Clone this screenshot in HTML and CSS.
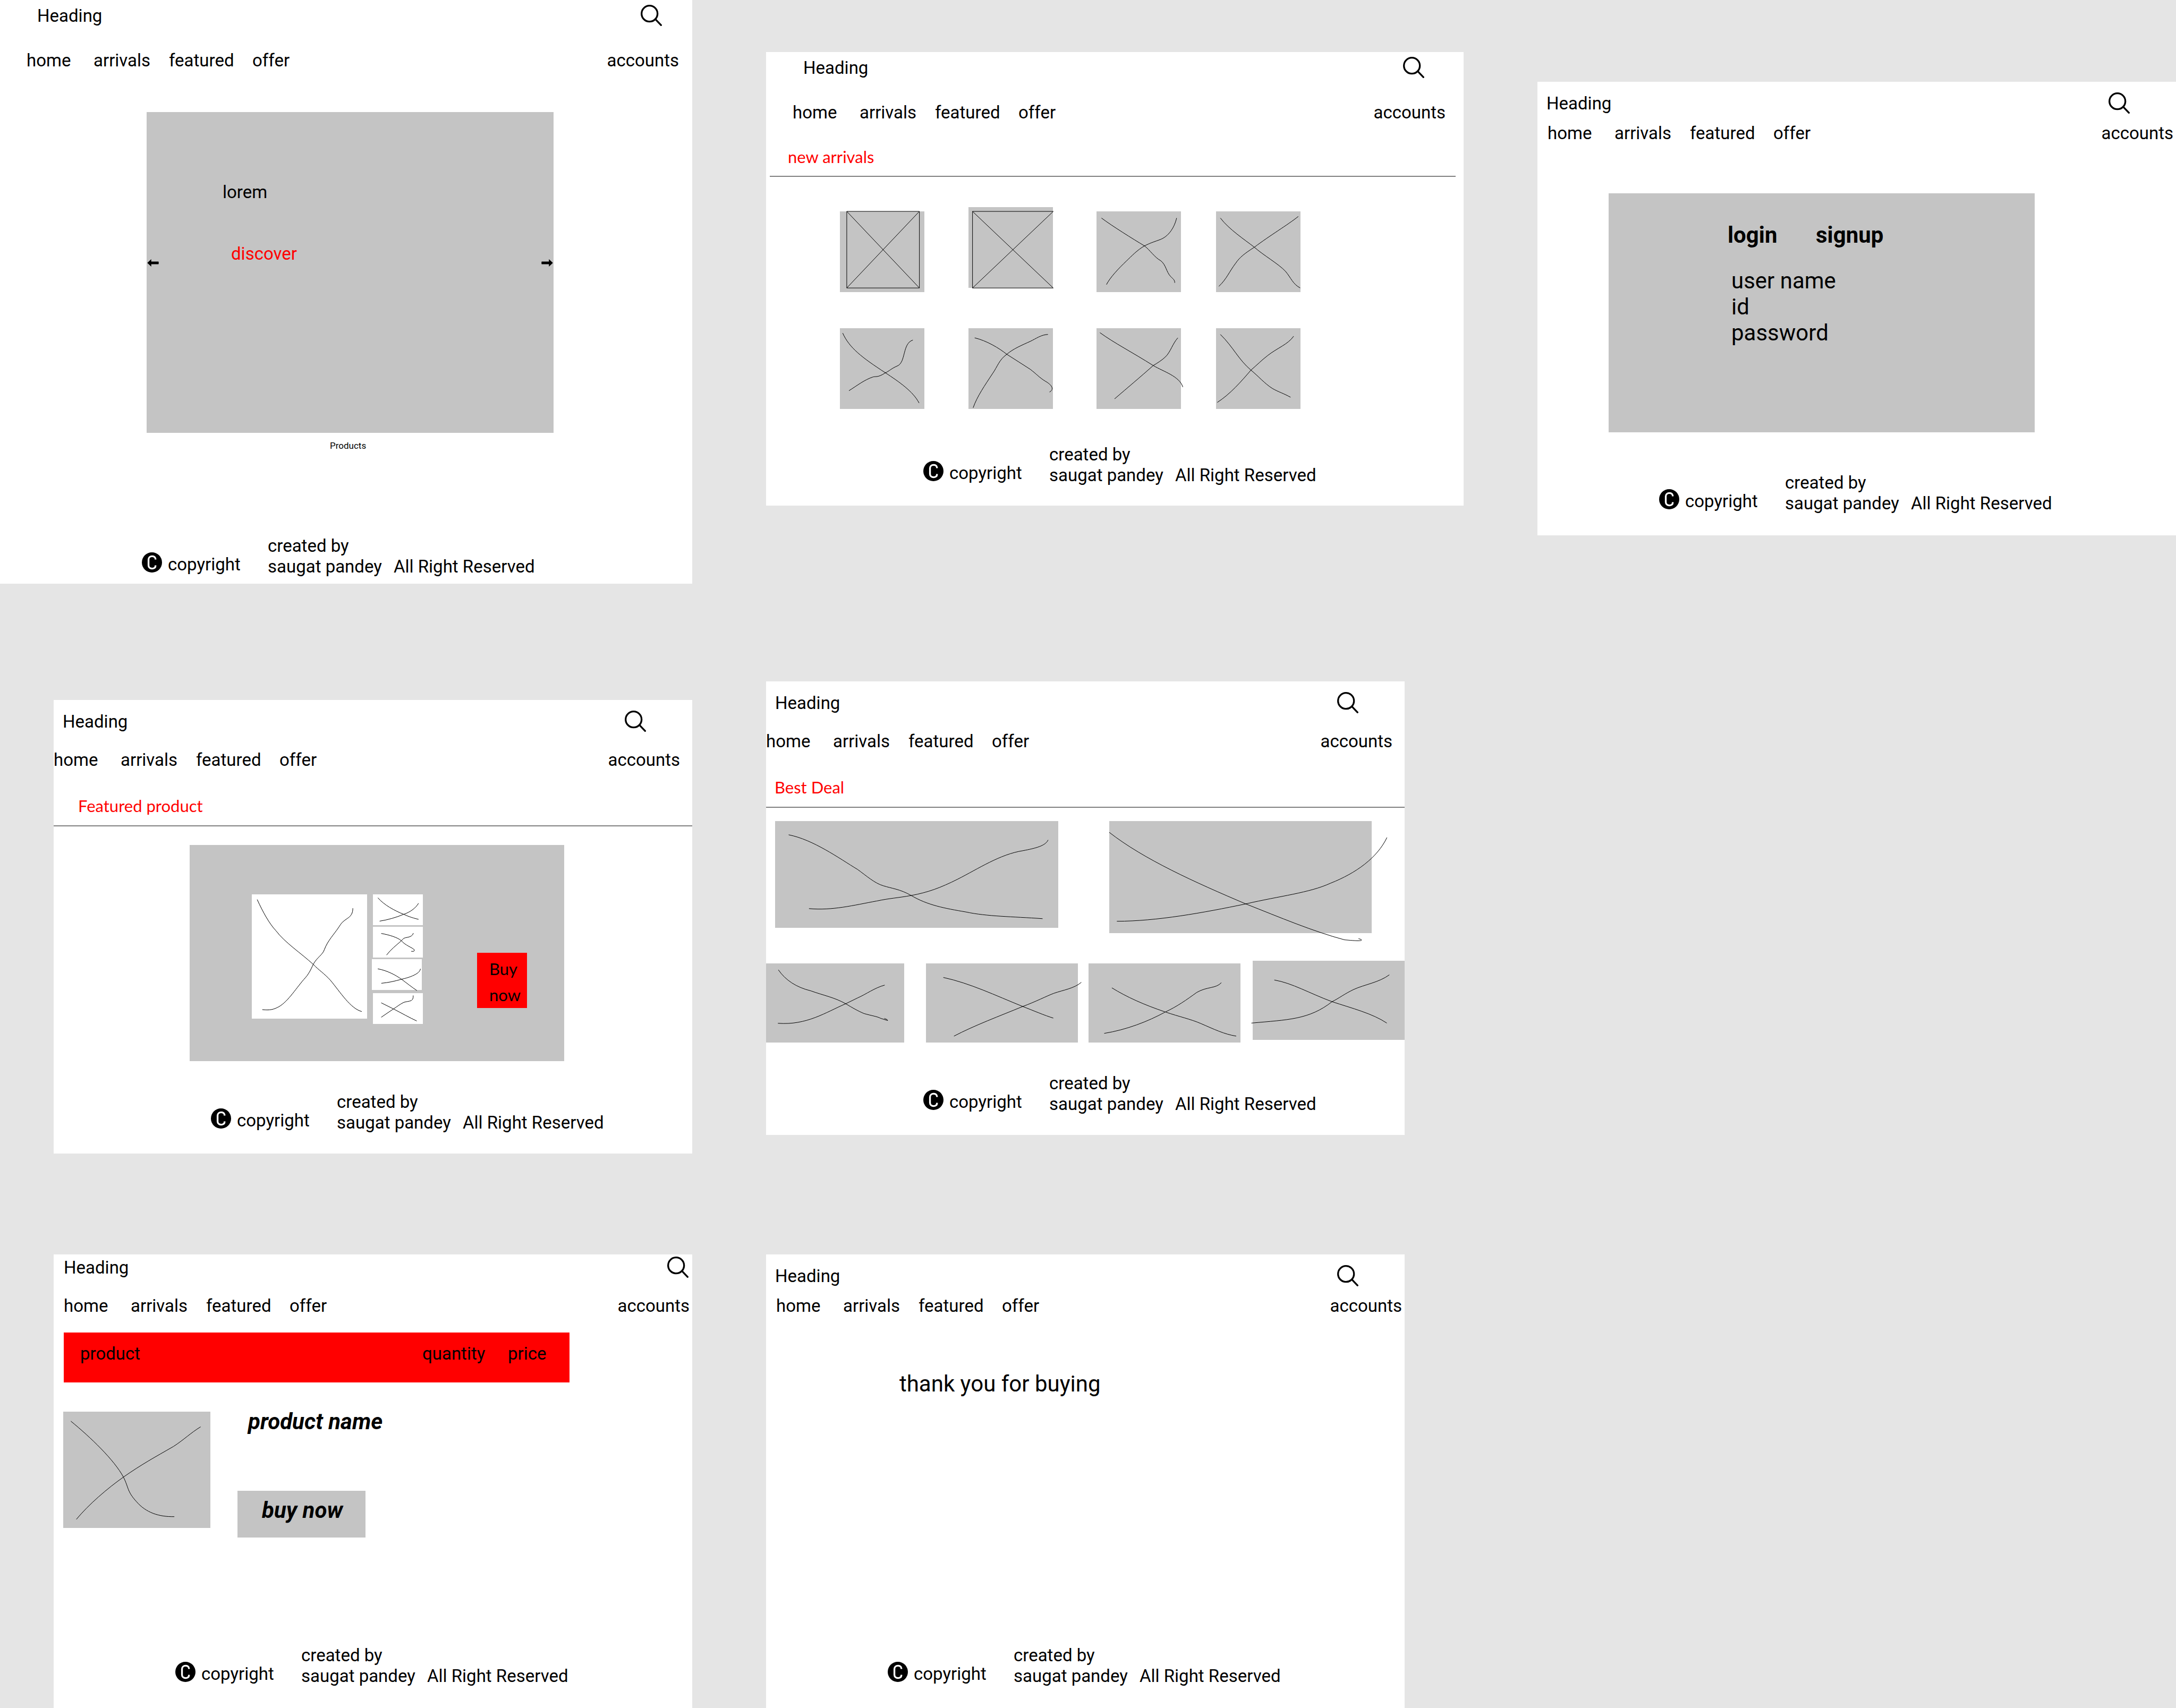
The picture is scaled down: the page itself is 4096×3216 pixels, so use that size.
FILE: index.html
```html
<!DOCTYPE html>
<html lang="en">
<head>
<meta charset="utf-8">
<title>Shop wireframes</title>
<link rel="stylesheet" href="styles.css">
</head>
<body>
<svg class="sprite" aria-hidden="true">
  <symbol id="search" viewBox="0 0 48 48">
    <circle cx="20" cy="20" r="18" fill="none" stroke="#000" stroke-width="4"/>
    <path d="M34 33.5L46 46" fill="none" stroke="#000" stroke-width="4" stroke-linecap="round"/>
  </symbol>
  <symbol id="copyright" viewBox="0 0 136 136">
    <circle cx="68" cy="68" r="68"/>
    <path d="M92 48V44C92 20 45 20 45 48V88C45 116 92 116 92 92V88" fill="none" stroke="#fff" stroke-width="12"/>
  </symbol>
  <symbol id="arrow" viewBox="0 0 26 17">
    <path d="M0 8.500L9 0V5.500H25Q26 5.500 26 6.500V10.500Q26 11.500 25 11.500H9V17Z"/>
  </symbol>
</svg>

<div class="board">
  <div class="column column-1">

    <article class="frame home">
      <header>
        <div class="top"><h1>Heading</h1><button class="icon" aria-label="Search"><svg><use href="#search"/></svg></button></div>
        <nav><a href="#">home</a><a href="#">arrivals</a><a href="#">featured</a><a href="#">offer</a><a class="account" href="#">accounts</a></nav>
      </header>
      <main>
        <section class="hero">
          <button class="arrow" aria-label="Previous"><svg><use href="#arrow"/></svg></button>
          <div class="hero-text"><p>lorem</p><a href="#">discover</a></div>
          <button class="arrow next" aria-label="Next"><svg><use href="#arrow"/></svg></button>
        </section>
        <p class="caption">Products</p>
      </main>
      <footer>
        <p class="copy"><svg><use href="#copyright"/></svg>copyright</p>
        <p>created by<br>saugat pandey</p>
        <p>All Right Reserved</p>
      </footer>
    </article>

    <article class="frame featured">
      <header>
        <div class="top"><h1>Heading</h1><button class="icon" aria-label="Search"><svg><use href="#search"/></svg></button></div>
        <nav><a href="#">home</a><a href="#">arrivals</a><a href="#">featured</a><a href="#">offer</a><a class="account" href="#">accounts</a></nav>
      </header>
      <main>
        <h2>Featured product</h2>
        <section class="showcase">
          <svg class="sketch photo" viewBox="63 114 582 840" preserveAspectRatio="none"><path d="M90 149C120 235 150 310 185 360C230 440 310 510 373 587C400 625 430 650 460 695C510 775 560 885 618 906M573 208C573 240 565 260 545 277C515 305 515 310 500 340C480 380 445 430 430 485C420 525 395 535 373 587C360 625 350 655 325 690C280 760 240 850 190 880C165 897 140 897 116 893"/></svg>
          <div class="thumbs">
            <svg class="sketch" viewBox="674 114 253 207" preserveAspectRatio="none"><path d="M699 137C730 185 785 225 830 248C860 267 885 275 905 282M905 174C890 208 860 235 830 248C790 270 750 285 708 294"/></svg>
            <svg class="sketch" viewBox="674 333 253 207" preserveAspectRatio="none"><path d="M716 378C755 387 800 405 818 427C840 460 870 470 884 488C885 498 880 499 868 498M879 376C870 410 840 400 828 413L818 427C790 460 765 485 743 523"/></svg>
            <svg class="sketch shifted" viewBox="668 552 253 207" preserveAspectRatio="none"><path d="M698 617C745 628 790 660 818 687C845 713 870 740 896 763M914 617C912 650 860 675 818 687C785 700 750 710 716 714"/></svg>
            <svg class="sketch" viewBox="674 780 253 207" preserveAspectRatio="none"><path d="M716 845L778 886C820 915 860 945 896 967M878 796C879 840 860 830 830 842C810 855 795 872 778 886L716 942"/></svg>
          </div>
          <button class="buy">Buy<br>now</button>
        </section>
      </main>
      <footer>
        <p class="copy"><svg><use href="#copyright"/></svg>copyright</p>
        <p>created by<br>saugat pandey</p>
        <p>All Right Reserved</p>
      </footer>
    </article>

    <article class="frame cart">
      <header>
        <div class="top"><h1>Heading</h1><button class="icon" aria-label="Search"><svg><use href="#search"/></svg></button></div>
        <nav><a href="#">home</a><a href="#">arrivals</a><a href="#">featured</a><a href="#">offer</a><a class="account" href="#">accounts</a></nav>
      </header>
      <main>
        <div class="cart-head"><span>product</span><span>quantity</span><span>price</span></div>
        <section class="item">
          <svg class="sketch" viewBox="55 573 347 391" preserveAspectRatio="none"><path d="M73 605C120 660 175 735 197 793C210 830 205 840 228 876C250 912 280 927 317 926M379 624C355 645 340 667 315 690C270 727 240 750 197 793C160 830 115 885 86 935"/></svg>
          <div class="item-info"><h3>product name</h3><button>buy now</button></div>
        </section>
      </main>
      <footer>
        <p class="copy"><svg><use href="#copyright"/></svg>copyright</p>
        <p>created by<br>saugat pandey</p>
        <p>All Right Reserved</p>
      </footer>
    </article>
  </div>

  <div class="column column-2">

    <article class="frame arrivals">
      <header>
        <div class="top"><h1>Heading</h1><button class="icon" aria-label="Search"><svg><use href="#search"/></svg></button></div>
        <nav><a href="#">home</a><a href="#">arrivals</a><a href="#">featured</a><a href="#">offer</a><a class="account" href="#">accounts</a></nav>
      </header>
      <main>
        <h2>new arrivals</h2>
        <section class="tiles">
          <svg class="sketch" viewBox="50 110 271 545" preserveAspectRatio="none"><path d="M72 110H305V627H72ZL305 627M305 110L72 627"/></svg>
          <svg class="sketch raised" viewBox="462 81 271 545" preserveAspectRatio="none"><path d="M734 110H475V627H734L475 110M734 110L475 627"/></svg>
          <svg class="sketch" viewBox="874 110 271 545" preserveAspectRatio="none"><path d="M890 155C925 210 990 295 1028 343C1045 370 1060 420 1080 443C1097 470 1098 520 1112 550C1122 570 1125 575 1125 592M1131 155C1125 210 1108 280 1075 303C1055 318 1045 325 1028 343C1005 370 985 415 970 445C945 495 918 555 906 604"/></svg>
          <svg class="sketch" viewBox="1259 110 271 545" preserveAspectRatio="none"><path d="M1273 155C1300 230 1350 300 1382 352C1410 405 1460 465 1482 515C1500 560 1505 600 1529 627M1523 144C1490 200 1430 275 1382 352C1350 395 1335 420 1322 460C1302 515 1292 570 1268 616"/></svg>
          <svg class="sketch" viewBox="50 898 271 545" preserveAspectRatio="none"><path d="M59 931C80 1030 120 1095 196 1199C240 1260 285 1325 304 1403M284 978C250 1000 262 1130 234 1153C215 1170 210 1185 196 1199C170 1235 165 1220 155 1228C130 1245 105 1285 79 1320"/></svg>
          <svg class="sketch" viewBox="462 901 271 545" preserveAspectRatio="none"><path d="M482 966C520 985 560 1035 585 1077C610 1110 635 1145 660 1178C680 1210 690 1235 708 1258C735 1290 735 1318 722 1332M717 943C695 945 680 970 660 990C635 1014 605 1040 585 1077C560 1115 555 1160 540 1205C515 1285 490 1360 477 1438"/></svg>
          <svg class="sketch" viewBox="874 901 271 545" preserveAspectRatio="none"><path d="M885 931C930 1000 990 1065 1056 1153C1090 1195 1140 1225 1151 1298M1135 966C1118 1005 1112 1060 1095 1095C1082 1120 1070 1135 1056 1153C1015 1230 975 1300 932 1378"/></svg>
          <svg class="sketch" viewBox="1259 901 271 545" preserveAspectRatio="none"><path d="M1273 943C1315 1030 1330 1110 1371 1184C1395 1225 1415 1275 1440 1308C1460 1332 1475 1340 1498 1367M1508 955C1490 1010 1455 1035 1425 1085C1405 1117 1390 1150 1371 1184C1340 1260 1305 1345 1263 1402"/></svg>
        </section>
      </main>
      <footer>
        <p class="copy"><svg><use href="#copyright"/></svg>copyright</p>
        <p>created by<br>saugat pandey</p>
        <p>All Right Reserved</p>
      </footer>
    </article>

    <article class="frame deals">
      <header>
        <div class="top"><h1>Heading</h1><button class="icon" aria-label="Search"><svg><use href="#search"/></svg></button></div>
        <nav><a href="#">home</a><a href="#">arrivals</a><a href="#">featured</a><a href="#">offer</a><a class="account" href="#">accounts</a></nav>
      </header>
      <main>
        <h2>Best Deal</h2>
        <section class="deal-large">
          <svg class="sketch" viewBox="50 499 668 350" preserveAspectRatio="none"><path d="M82 544C140 560 200 620 245 658C265 678 285 703 305 711C325 720 345 722 371 743C410 775 450 785 500 797C550 812 610 812 681 819M694 561C688 580 665 588 635 596C580 608 530 655 480 690C440 718 410 733 371 743C340 751 320 752 290 761C235 775 185 793 130 786"/></svg>
          <svg class="sketch tall" viewBox="838 499 619 368" preserveAspectRatio="none"><path d="M838 536C920 625 1040 700 1160 771C1240 815 1320 862 1393 889C1410 891 1432 894 1433 890C1434 888 1430 887 1426 885M1493 553C1470 620 1420 670 1360 703C1310 735 1240 745 1160 771C1060 800 950 828 856 828"/></svg>
        </section>
        <section class="deal-small">
          <svg class="sketch" viewBox="29 965 326 259" preserveAspectRatio="none"><path d="M58 986C75 1020 100 1043 135 1055C165 1070 190 1076 217 1097C235 1112 245 1120 260 1129C280 1137 290 1138 300 1145L316 1152C316 1149 312 1147 308 1145M309 1036C285 1045 265 1066 245 1078L217 1097C170 1125 125 1168 57 1161"/></svg>
          <svg class="sketch" viewBox="406 965 358 259" preserveAspectRatio="none"><path d="M447 1011C510 1030 570 1070 634 1106C660 1120 685 1135 706 1144M772 1027C755 1047 730 1052 707 1063C690 1072 665 1090 634 1106C580 1137 520 1168 472 1203"/></svg>
          <svg class="sketch" viewBox="790 965 358 259" preserveAspectRatio="none"><path d="M845 1045C880 1075 920 1100 971 1124C1005 1140 1030 1147 1055 1162C1085 1180 1110 1197 1138 1203M1103 1028C1090 1048 1070 1040 1045 1060C1020 1085 1000 1105 971 1124C930 1155 880 1182 827 1194"/></svg>
          <svg class="sketch raised" viewBox="1177 957 358 259" preserveAspectRatio="none"><path d="M1228 1020C1270 1030 1310 1063 1364 1091C1410 1112 1460 1130 1493 1161M1499 1003C1475 1028 1440 1035 1415 1051C1395 1064 1380 1080 1364 1091C1310 1150 1260 1150 1174 1161"/></svg>
        </section>
      </main>
      <footer>
        <p class="copy"><svg><use href="#copyright"/></svg>copyright</p>
        <p>created by<br>saugat pandey</p>
        <p>All Right Reserved</p>
      </footer>
    </article>

    <article class="frame thanks">
      <header>
        <div class="top"><h1>Heading</h1><button class="icon" aria-label="Search"><svg><use href="#search"/></svg></button></div>
        <nav><a href="#">home</a><a href="#">arrivals</a><a href="#">featured</a><a href="#">offer</a><a class="account" href="#">accounts</a></nav>
      </header>
      <main>
        <p class="message">thank you for buying</p>
      </main>
      <footer>
        <p class="copy"><svg><use href="#copyright"/></svg>copyright</p>
        <p>created by<br>saugat pandey</p>
        <p>All Right Reserved</p>
      </footer>
    </article>
  </div>

  <div class="column column-3">

    <article class="frame login">
      <header>
        <div class="top"><h1>Heading</h1><button class="icon" aria-label="Search"><svg><use href="#search"/></svg></button></div>
        <nav><a href="#">home</a><a href="#">arrivals</a><a href="#">featured</a><a href="#">offer</a><a class="account" href="#">accounts</a></nav>
      </header>
      <main>
        <section class="panel">
          <div class="tabs"><button>login</button><button>signup</button></div>
          <ul class="fields"><li>user name</li><li>id</li><li>password</li></ul>
        </section>
      </main>
      <footer>
        <p class="copy"><svg><use href="#copyright"/></svg>copyright</p>
        <p>created by<br>saugat pandey</p>
        <p>All Right Reserved</p>
      </footer>
    </article>
  </div>
</div>
</body>
</html>
```
FILE: styles.css
```css
* { box-sizing: border-box; }

body {
  margin: 0;
  background: #e5e5e5;
  color: #000;
  font: 33px/39px Roboto, "Liberation Sans", sans-serif;
}

h1, h2, h3, p, ul { margin: 0; padding: 0; font: inherit; list-style: none; }
a { color: inherit; text-decoration: none; }
button { margin: 0; padding: 0; border: 0; background: none; color: inherit; font: inherit; text-align: left; cursor: pointer; }
svg { display: block; }
.sprite { display: none; }

/* Board: three columns of frames */
.board {
  display: grid;
  grid-template-columns: minmax(0, 1303fr) minmax(0, 1313fr) minmax(0, 1202fr);
  column-gap: 139px;
}
.column { display: flex; flex-direction: column; }
.column-2 { padding-top: 98px; }
.column-3 { padding-top: 154px; }

.frame {
  display: flex;
  flex-direction: column;
  min-height: 854px;
  padding-bottom: 41px;
  background: #fff;
}
.frame.home { min-height: 1099px; padding-bottom: 13px; }
.frame.arrivals { padding-bottom: 38px; }
.frame.featured, .frame.deals { padding-bottom: 39px; }
.frame.featured { margin: 219px 0 0 101px; }
.frame.cart { margin: 190px 0 0 101px; }
.frame.deals { margin: 331px 111px 0 0; }
.frame.thanks { margin: 225px 111px 0 0; }

/* Header */
.top {
  display: flex;
  justify-content: space-between;
  align-items: center;
  padding: 20px 87px 0 17px;
}
.icon svg { width: 40px; height: 40px; }
nav {
  display: grid;
  grid-template-columns: 126px 142px 157px auto 1fr;
  padding: 17px 5px 0 19px;
}
.account { justify-self: end; }

.home .top { padding: 9px 57px 0 70px; }
.arrivals .top { padding: 9px 74px 0 70px; }
.home nav { padding: 45px 25px 0 50px; }
.arrivals nav { padding: 45px 34px 0 50px; }
.featured nav, .deals nav { padding: 33px 23px 0 0; }
.cart .top { padding: 4px 7px 0 19px; }
.cart nav { padding-top: 33px; }

/* Footer */
footer {
  display: grid;
  grid-template-columns: 237px 237px auto;
  align-items: end;
  margin-top: auto;
  padding-left: 229px;
}
.home footer { padding-left: 267px; }
.arrivals footer, .featured footer, .deals footer { padding-left: 296px; }
.copy { display: flex; align-items: flex-end; gap: 11px; padding-bottom: 4px; }
.copy svg { width: 38px; height: 38px; margin-bottom: 4px; }

/* Section titles with a rule below */
h2 {
  padding: 48px 16px 17px;
  border-bottom: 2px solid #808080;
  color: #f00;
  font: 400 31px/39px Lato, "Open Sans", sans-serif;
}
.arrivals h2 { margin: 0 15px 0 7px; padding: 45px 34px 16px; }
.featured h2 { padding-left: 46px; }

/* Crossed-out picture placeholders */
.sketch { overflow: visible; background: #c4c4c4; }
.sketch path {
  fill: none;
  stroke: #000;
  stroke-width: 1px;
  vector-effect: non-scaling-stroke;
}

/* Home */
.hero {
  display: grid;
  grid-template-columns: auto 1fr auto;
  align-items: start;
  margin: 78px 261px 0 276px;
  padding: 0 1px;
  min-height: 604px;
  background: #c4c4c4;
}
.arrow { margin-top: 277px; }
.arrow svg { width: 22px; height: 14px; }
.next svg { transform: scaleX(-1); }
.hero-text { display: grid; gap: 77px; padding: 131px 0 0 120px; }
.hero-text a { padding-left: 16px; color: #f00; }
.caption { padding: 14px 0 0 621px; font-size: 17px; line-height: 20px; }

/* New arrivals */
.tiles {
  display: grid;
  grid-template-columns: 242fr 241fr 225fr 159fr;
  row-gap: 68px;
  margin: 65px 307px 0 139px;
}
.tiles .sketch { width: 159px; height: 152px; }
.tiles .raised { margin-top: -8px; }

/* Featured product */
.showcase {
  display: flex;
  align-items: flex-start;
  min-height: 407px;
  margin: 35px 241px 0 256px;
  padding: 93px 0 0 117px;
  background: #c4c4c4;
}
.showcase .sketch { background: #fff; }
.photo { width: 217px; height: 234px; }
.thumbs { display: grid; gap: 3px; margin-left: 11px; }
.thumbs .sketch { width: 94px; height: 58px; }
.thumbs .shifted { margin: 0 0 3px -2px; }
.buy {
  width: 94px;
  height: 104px;
  margin: 110px 0 0 102px;
  padding: 6px 0 0 23px;
  background: #f00;
  font: 400 31px/49px Lato, "Open Sans", sans-serif;
}

/* Best deal */
.deal-large {
  display: grid;
  grid-template-columns: 533fr 494fr;
  align-items: start;
  column-gap: 96px;
  margin: 25px 62px 0 17px;
}
.deal-large .sketch { width: 100%; height: 201px; }
.deal-large .tall { height: 211px; }
.deal-small {
  display: grid;
  grid-template-columns: 301fr 306fr 309fr 286fr;
  margin-top: 57px;
}
.deal-small .sketch { width: 286px; height: 149px; }
.deal-small .sketch:first-child { width: 260px; }
.deal-small .raised { margin-top: -5px; }

/* Cart */
.cart-head {
  display: grid;
  grid-template-columns: 1fr 161px 87px;
  min-height: 94px;
  margin: 31px 231px 0 19px;
  padding: 20px 29px 0 31px;
  background: #f00;
}
.item { display: flex; gap: 51px; margin: 55px 0 0 18px; }
.item .sketch { width: 277px; height: 219px; }
.item-info { font-size: 42px; line-height: 49px; font-weight: 700; font-style: italic; margin-top: -6px; }
.item-info h3 { padding-left: 20px; }
.item-info button { display: block; width: 241px; height: 88px; margin-top: 106px; padding: 0 0 16px 46px; background: #c4c4c4; }

/* Thanks */
.message { padding: 103px 0 0 251px; font-size: 42px; line-height: 49px; }

/* Login */
.panel {
  min-height: 450px;
  margin: 94px 266px 0 134px;
  padding: 54px 0 0 224px;
  background: #c4c4c4;
  font-size: 42px;
  line-height: 49px;
}
.tabs { display: grid; grid-template-columns: 166px auto; font-weight: 700; }
.fields { padding: 37px 0 0 7px; }
```
